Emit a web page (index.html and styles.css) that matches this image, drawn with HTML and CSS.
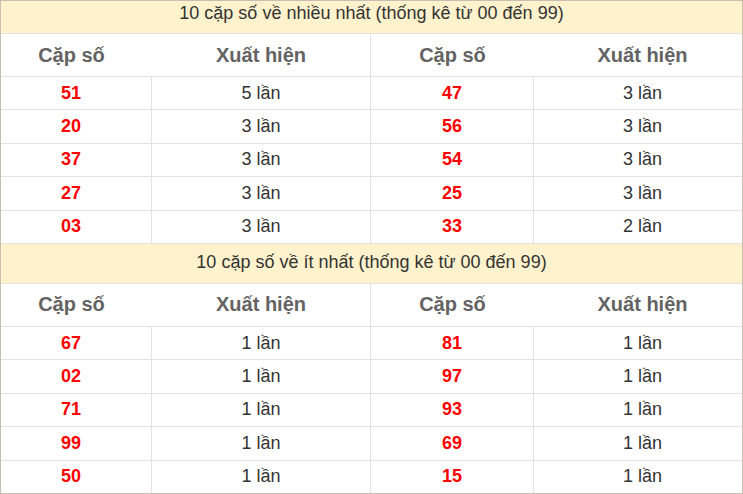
FILE: index.html
```html
<!DOCTYPE html>
<html lang="vi">
<head>
<meta charset="utf-8">
<link rel="stylesheet" href="styles.css">
</head>
<body>
<div class="box">
  <div class="title first">10 cặp số về nhiều nhất (thống kê từ 00 đến 99)</div>
  <div class="grid">
    <div class="th c1">Cặp số</div><div class="th c2">Xuất hiện</div><div class="th c3">Cặp số</div><div class="th c4">Xuất hiện</div>
    <div class="td c1 num">51</div><div class="td c2">5 lần</div><div class="td c3 num">47</div><div class="td c4">3 lần</div>
    <div class="td c1 num">20</div><div class="td c2">3 lần</div><div class="td c3 num">56</div><div class="td c4">3 lần</div>
    <div class="td c1 num">37</div><div class="td c2">3 lần</div><div class="td c3 num">54</div><div class="td c4">3 lần</div>
    <div class="td c1 num">27</div><div class="td c2">3 lần</div><div class="td c3 num">25</div><div class="td c4">3 lần</div>
    <div class="td c1 num">03</div><div class="td c2">3 lần</div><div class="td c3 num">33</div><div class="td c4">2 lần</div>
  </div>
  <div class="title">10 cặp số về ít nhất (thống kê từ 00 đến 99)</div>
  <div class="grid">
    <div class="th c1">Cặp số</div><div class="th c2">Xuất hiện</div><div class="th c3">Cặp số</div><div class="th c4">Xuất hiện</div>
    <div class="td c1 num">67</div><div class="td c2">1 lần</div><div class="td c3 num">81</div><div class="td c4">1 lần</div>
    <div class="td c1 num">02</div><div class="td c2">1 lần</div><div class="td c3 num">97</div><div class="td c4">1 lần</div>
    <div class="td c1 num">71</div><div class="td c2">1 lần</div><div class="td c3 num">93</div><div class="td c4">1 lần</div>
    <div class="td c1 num">99</div><div class="td c2">1 lần</div><div class="td c3 num">69</div><div class="td c4">1 lần</div>
    <div class="td c1 num">50</div><div class="td c2">1 lần</div><div class="td c3 num">15</div><div class="td c4">1 lần</div>
  </div>
</div>
</body>
</html>
```
FILE: styles.css
```css
* { box-sizing: border-box; }
html, body { margin: 0; padding: 0; background: #fff; }
body { font-family: "Liberation Sans", Arial, sans-serif; color: #333; }
.box {
  width: 743px;
  height: 494px;
  border: 1px solid #c9beb1;
  overflow: hidden;
}
.title {
  height: 40px;
  background: #fff2cc;
  border-bottom: 1px solid #e6e3da;
  font-size: 18px;
  display: flex;
  align-items: center;
  justify-content: center;
  padding-bottom: 2px;
}
.title.first {
  height: 33px;
  padding-bottom: 7px;
}
.grid {
  display: grid;
  grid-template-columns: 151px 219px 163px 208px;
}
.th, .td {
  display: flex;
  align-items: center;
  justify-content: center;
  border-bottom: 1px solid #e2e2e2;
}
.th {
  height: 43px;
  font-size: 20px;
  font-weight: bold;
  color: #636363;
}
.td {
  height: 33.4px;
  font-size: 18px;
}
.td.c1, .td.c2, .td.c3, .th.c2 { border-right: 1px solid #e2e2e2; }
.c1 { padding-right: 10px; }
.c4 { padding-left: 9px; }
.num { color: #ff0000; font-weight: bold; }
```
